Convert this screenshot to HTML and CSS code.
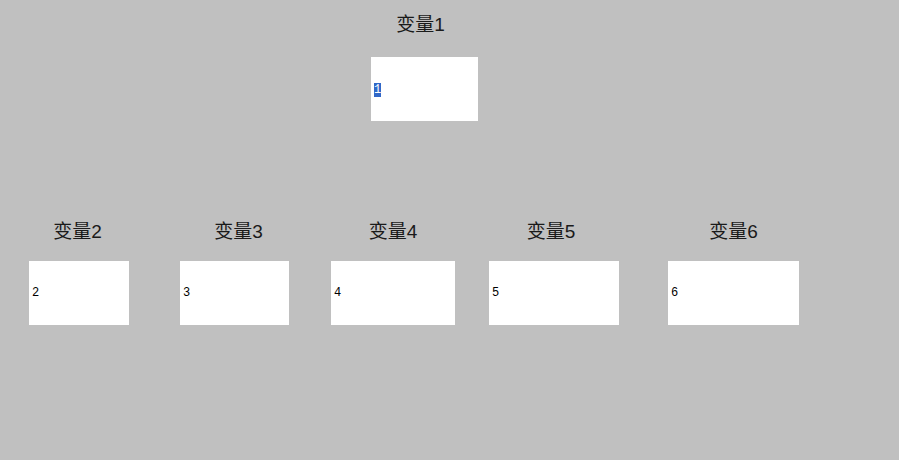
FILE: index.html
```html
<!DOCTYPE html>
<html lang="zh">
<head>
<meta charset="utf-8">
<title>变量</title>
<link rel="stylesheet" href="styles.css">
</head>
<body>
<div class="canvas">
  <div class="node n1 top">
    <div class="label">变量1</div>
    <div class="box"><span class="sel">1</span></div>
  </div>
  <div class="node n2 bottom">
    <div class="label">变量2</div>
    <div class="box"><span>2</span></div>
  </div>
  <div class="node n3 bottom">
    <div class="label">变量3</div>
    <div class="box"><span>3</span></div>
  </div>
  <div class="node n4 bottom">
    <div class="label">变量4</div>
    <div class="box"><span>4</span></div>
  </div>
  <div class="node n5 bottom">
    <div class="label">变量5</div>
    <div class="box"><span>5</span></div>
  </div>
  <div class="node n6 bottom">
    <div class="label">变量6</div>
    <div class="box"><span>6</span></div>
  </div>
</div>
</body>
</html>
```
FILE: styles.css
```css
html, body {
  margin: 0;
  padding: 0;
  background: #c0c0c0;
}
.canvas {
  position: relative;
  width: 899px;
  height: 460px;
  background: #c0c0c0;
  overflow: hidden;
}
.node {
  position: absolute;
  display: flex;
  flex-direction: column;
  align-items: center;
}
.label {
  font-family: "Liberation Sans", "Noto Sans CJK SC", sans-serif;
  font-size: 19px;
  line-height: 20px;
  height: 20px;
  color: #1a1a1a;
  white-space: nowrap;
}
.box {
  align-self: stretch;
  height: 64px;
  background: #fff;
  display: flex;
  align-items: center;
  padding-left: 3px;
  font-family: "Liberation Mono", "DejaVu Sans Mono", monospace;
  font-size: 12px;
  color: #000;
}
.sel {
  background: #3168c8;
  color: #fff;
  display: inline-block;
  width: 7px;
  height: 14px;
  line-height: 14px;
  text-align: center;
  margin-top: 1px;
}
.top .box { margin-top: 22px; }
.bottom .box { margin-top: 19px; }
.n1 { left: 371px; top: 15px; width: 107px; }
.n2 { left: 29px; top: 222px; width: 100px; }
.n3 { left: 180px; top: 222px; width: 109px; }
.n4 { left: 331px; top: 222px; width: 124px; }
.n5 { left: 489px; top: 222px; width: 130px; }
.n6 { left: 668px; top: 222px; width: 131px; }
.n1 .label { margin-left: -8px; }
.n2 .label { margin-left: -3px; }
.n3 .label { margin-left: 8px; }
.n5 .label { margin-left: -6px; }
```
